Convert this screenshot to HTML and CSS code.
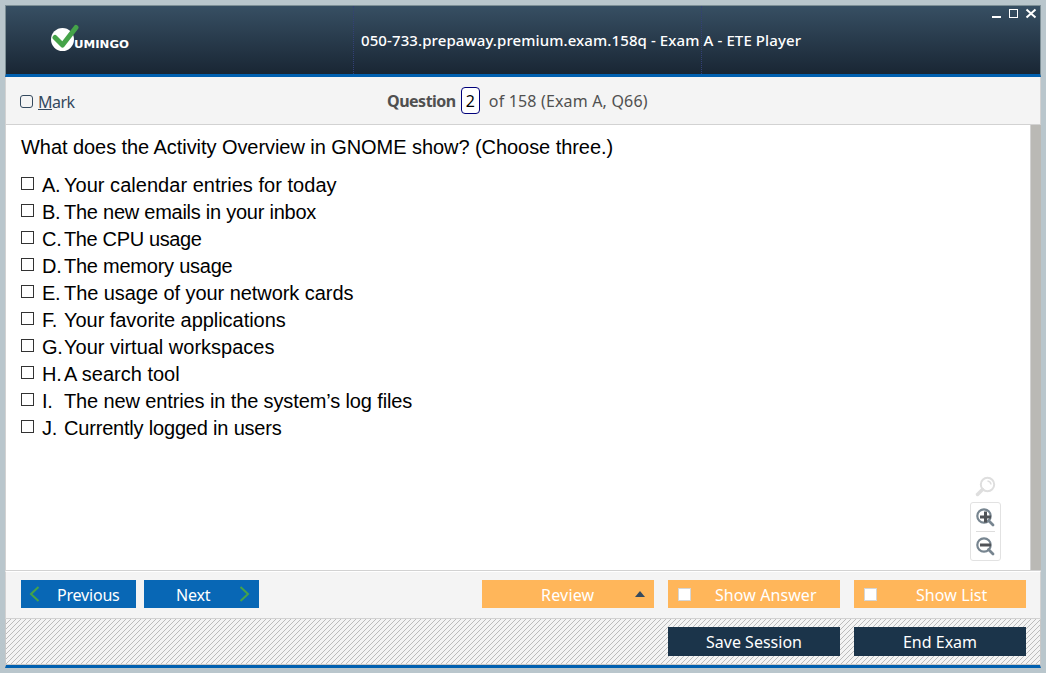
FILE: index.html
```html
<!DOCTYPE html>
<html lang="en">
<head>
<meta charset="utf-8">
<title>ETE Player</title>
<link rel="stylesheet" href="styles.css">
</head>
<body>
<div class="window">
  <header class="titlebar">
    <svg class="logo" width="84" height="30" viewBox="0 0 84 30">
      <circle cx="12.500" cy="15.500" r="11.500" fill="#fff"/>
      <path d="M5 13.500 12.500 21 26 3.500" fill="none" stroke="#45a349" stroke-width="5" stroke-linecap="round" stroke-linejoin="round"/>
      <text class="logo-text" x="24" y="24" textLength="55" lengthAdjust="spacingAndGlyphs">UMINGO</text>
    </svg>
    <h1 class="title"><span>050-733.prepaway.premium.exam.158q - Exam A - ETE Player</span></h1>
    <svg class="controls" width="48" height="14" viewBox="0 0 48 14">
      <path d="M1 12h9" stroke="#fff" stroke-width="2"/>
      <rect x="18.500" y="4.500" width="8" height="8" fill="none" stroke="#fff"/>
      <path d="M35.500 4.500l9 8M44.500 4.500l-9 8" stroke="#fff" stroke-width="2"/>
    </svg>
  </header>
  <div class="toolbar">
    <label class="mark"><i class="mark-box"></i><span><u>M</u>ark</span></label>
    <div class="position"><b>Question</b><span class="number">2</span><span class="total">of 158 (Exam A, Q66)</span></div>
  </div>
  <main class="content">
    <section class="question">
      <p class="prompt"><span>What does the Activity Overview in GNOME show? (Choose three.)</span></p>
      <ul class="answers">
        <li><i></i><b>A.</b><span>Your calendar entries for today</span></li>
        <li><i></i><b>B.</b><span>The new emails in your inbox</span></li>
        <li><i></i><b>C.</b><span>The CPU usage</span></li>
        <li><i></i><b>D.</b><span>The memory usage</span></li>
        <li><i></i><b>E.</b><span>The usage of your network cards</span></li>
        <li><i></i><b>F.</b><span>Your favorite applications</span></li>
        <li><i></i><b>G.</b><span>Your virtual workspaces</span></li>
        <li><i></i><b>H.</b><span>A search tool</span></li>
        <li><i></i><b>I.</b><span>The new entries in the system’s log files</span></li>
        <li><i></i><b>J.</b><span>Currently logged in users</span></li>
      </ul>
    </section>
    <div class="scrollbar"></div>
    <div class="zoom">
      <svg width="22" height="22" viewBox="0 0 22 22" fill="none" stroke="#dedede">
        <circle cx="12.500" cy="8.500" r="6.700" stroke-width="2"/><path d="M7.500 13.500l-5 5" stroke-width="3.500" stroke-linecap="round"/><path d="M12.500 5a4 4 0 0 1 3.500 3.500" stroke-width="1.500"/>
      </svg>
      <div class="zoom-panel">
        <svg width="20" height="20" viewBox="0 0 20 20" fill="none" stroke="#778590">
          <circle cx="8" cy="8" r="6.700" stroke-width="2.200"/><path d="M12.500 12.500l4.500 4.500" stroke-width="2.800" stroke-linecap="round"/><path d="M4 9h11M9.500 3.500v11" stroke="#505357" stroke-width="3"/>
        </svg>
        <hr>
        <svg width="20" height="20" viewBox="0 0 20 20" fill="none" stroke="#778590">
          <circle cx="8" cy="8" r="6.700" stroke-width="2.200"/><path d="M12.500 12.500l4.500 4.500" stroke-width="2.800" stroke-linecap="round"/><path d="M4 8h11" stroke="#505357" stroke-width="3"/>
        </svg>
      </div>
    </div>
  </main>
  <nav class="actions">
    <button class="btn blue prev"><svg width="12" height="18" viewBox="0 0 12 18"><path d="M10.500 2 3 9l7.500 7" fill="none" stroke="#45a349" stroke-width="2"/></svg><span>Previous</span></button>
    <button class="btn blue next"><span>Next</span><svg width="12" height="18" viewBox="0 0 12 18"><path d="M1.500 2 9 9l-7.500 7" fill="none" stroke="#45a349" stroke-width="2"/></svg></button>
    <span class="spacer"></span>
    <button class="btn orange review"><span>Review</span><svg width="10" height="6" viewBox="0 0 10 6"><path d="M0 6 5 0l5 6z" fill="#34495e"/></svg></button>
    <button class="btn orange check"><i></i><span class="show-answer">Show Answer</span></button>
    <button class="btn orange check"><i></i><span class="show-list">Show List</span></button>
  </nav>
  <footer class="session">
    <button class="btn navy save">Save Session</button>
    <button class="btn navy end">End Exam</button>
  </footer>
</div>
</body>
</html>
```
FILE: styles.css
```css
* { box-sizing: border-box; }
body { margin: 0; width: 1046px; height: 673px; padding: 5px; background: #b9c6cc; font-family: "Noto Sans", sans-serif; overflow: hidden; }
.window { width: 1036px; height: 663px; display: flex; flex-direction: column; background: #fff; }
.window > * { flex-shrink: 0; }
.titlebar { height: 72px; display: flex; border: 1px solid #7d8f96; border-bottom: 3px solid #0060b0; background: linear-gradient(#374f63, #192634); }
.logo { margin: 18px 0 0 44px; flex: none; }
.logo-text { font: bold 10.500px "DejaVu Sans", sans-serif; fill: #fff; }
.title { margin: 0 0 0 219px; width: 349px; flex: none; font-size: 15px; font-weight: 500; line-height: 68px; letter-spacing: .1px; color: #fff; white-space: nowrap; border-left: 1px dotted #334077; border-right: 1px dotted #334077; padding-left: 7px; }
.controls { margin: -1px 1px 0 auto; }
.toolbar { height: 48px; display: grid; grid-template-columns: 367px 1fr; background: #f4f4f4; border: solid #d2d2d2; border-width: 0 1px 1px; padding-left: 14px; align-items: center; color: #34495e; }
.mark { display: flex; align-items: center; gap: 5px; font-size: 16px; line-height: 22px; letter-spacing: -.5px; padding-top: 3px; }
.mark-box { width: 13px; height: 13px; border: 1px solid #34495e; border-radius: 3px; margin-top: -1px; }
.position { display: flex; align-items: center; font-size: 16px; color: #505050; white-space: nowrap; }
.position b { letter-spacing: -.5px; padding-top: 1px; }
.total { letter-spacing: .17px; padding-top: 1px; }
.number { width: 19px; height: 27px; margin: 0 9px 0 5px; border: 1px solid #00007a; border-radius: 4px; background: #fff; color: #000; text-align: center; line-height: 27px; }
.content { height: 446px; display: flex; position: relative; border: solid #d2d2d2; border-width: 0 0 1px 1px; }
.question { flex: 1; padding: 9px 0 0 15px; font: 20px/27px "Liberation Sans", Arial, sans-serif; color: #000; }
.prompt { margin: 0 0 11px; white-space: nowrap; letter-spacing: -.06px; }
.answers { margin: 0; padding: 0; list-style: none; }
.answers li { display: flex; height: 27px; white-space: nowrap; }
.answers i { width: 13px; height: 13px; border: 1px solid #333; margin: 5px 8px 0 0; }
.answers b { width: 22px; font-weight: 400; letter-spacing: -.3px; }
.answers li:nth-child(1) span { letter-spacing: .03px; }
.answers li:nth-child(2) span { letter-spacing: -.25px; }
.answers li:nth-child(3) span { letter-spacing: -.36px; }
.answers li:nth-child(4) span { letter-spacing: -.24px; }
.answers li:nth-child(5) span { letter-spacing: -.06px; }
.answers li:nth-child(6) span { letter-spacing: -.04px; }
.answers li:nth-child(9) span { letter-spacing: -.12px; }
.answers li:nth-child(10) span { letter-spacing: -.19px; }
.scrollbar { width: 11px; background: #bab9b5; border-left: 1px solid #d2d2d2; }
.zoom { position: absolute; right: 40px; bottom: 9px; width: 31px; }
.zoom > svg { display: block; margin: 0 0 4px 5px; }
.zoom-panel { height: 59px; border: 1px solid #e2e2e2; border-radius: 3px; padding: 5px; display: flex; flex-direction: column; }
.zoom-panel svg { display: block; flex: none; }
.zoom-panel hr { width: 19px; margin: 3px 0 5px; border: 0; border-top: 1px solid #ddd; }
.actions { height: 48px; display: flex; align-items: flex-start; gap: 14px; padding: 8px 14px 0 15px; background: #f4f4f4; border: solid #d2d2d2; border-width: 0 1px 1px; border-top: 1px solid #fff; }
.spacer { flex: 1; }
.btn { border: 0; border-radius: 0; padding: 0; height: 28px; width: 172px; color: #fff; font: 16px/28px "Noto Sans", sans-serif; white-space: nowrap; display: flex; align-items: center; flex: none; }
.btn span { padding-top: 1px; }
.blue { width: 115px; background: #0867b5; }
.prev { margin-right: -6px; padding-left: 7px; gap: 17px; letter-spacing: -.2px; }
.next { justify-content: space-between; padding: 0 8px 0 32px; letter-spacing: -.2px; }
.orange { background: #ffb65a; }
.review { justify-content: space-between; padding: 0 9px 0 59px; letter-spacing: .2px; }
.check i { width: 13px; height: 13px; margin: 1px 0 0 10px; background: #fff; border: 1px solid #d5d5d5; }
.show-answer { margin-left: 24px; letter-spacing: .08px; }
.show-list { margin-left: 39px; letter-spacing: .08px; }
.navy { height: 29px; padding-top: 1px; background: #1b344a; justify-content: center; }
.session { height: 49px; display: flex; justify-content: flex-end; gap: 14px; padding: 8px 14px 0 0; border: 1px solid #c8c8c8; border-top: 0; border-bottom: 3px solid #0060b0; box-shadow: inset 0 -1px #c8c8c8; background: #f4f4f4 url("data:image/svg+xml,%3Csvg xmlns='http://www.w3.org/2000/svg' width='5' height='5' shape-rendering='crispEdges'%3E%3Cpath d='M4 0h1v1h-1zM3 1h1v1h-1zM2 2h1v1h-1zM1 3h1v1h-1zM0 4h1v1h-1z' fill='%23bcbcbc'/%3E%3C/svg%3E"); }
```
